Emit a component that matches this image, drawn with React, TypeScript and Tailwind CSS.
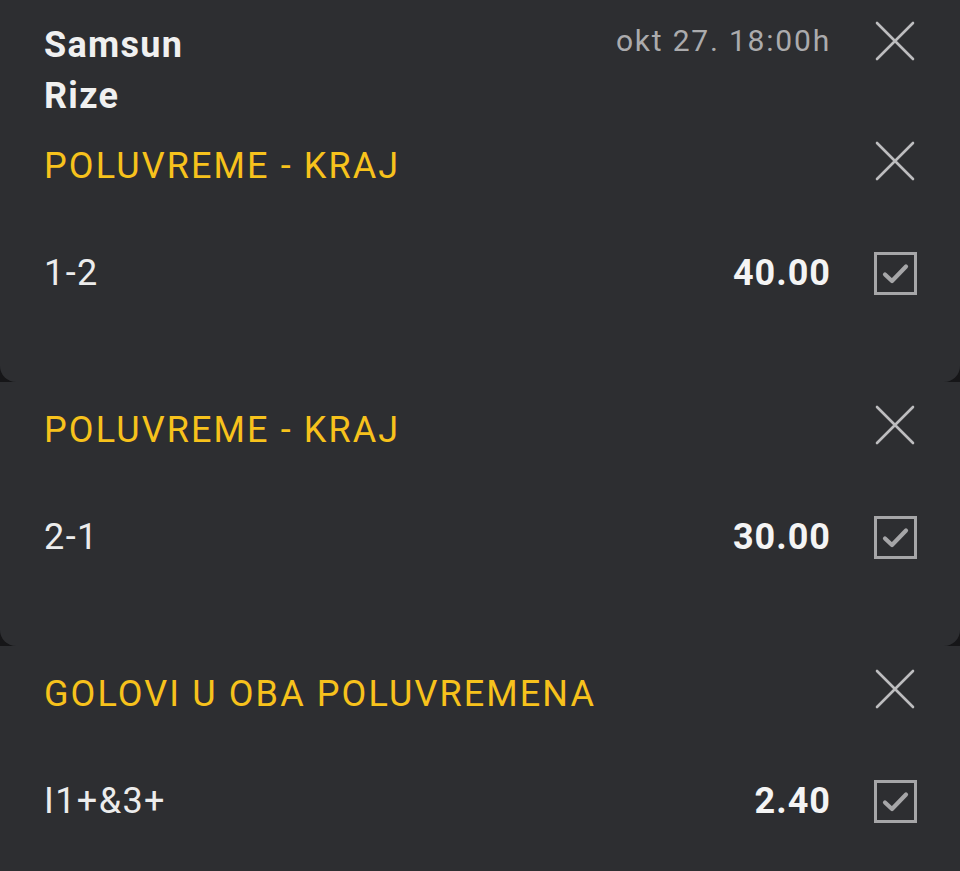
import React from "react"

interface Pick {
  market: string
  label: string
  odds: string
}

const picks: Pick[] = [
  { market: "POLUVREME - KRAJ", label: "1-2", odds: "40.00" },
  { market: "POLUVREME - KRAJ", label: "2-1", odds: "30.00" },
  { market: "GOLOVI U OBA POLUVREMENA", label: "I1+&3+", odds: "2.40" },
]

function CloseIcon({ className = "" }: { className?: string }) {
  return (
    <div className={`w-12 h-12 flex items-center justify-center shrink-0 ${className}`}>
      <svg width="40" height="40" viewBox="0 0 40 40" fill="none" stroke="#bdbdbf" strokeWidth="2.6" strokeLinecap="round">
        <path d="M2 2L38 38M38 2L2 38" />
      </svg>
    </div>
  )
}

function CheckBox() {
  return (
    <div className="w-12 h-12 flex items-center justify-center shrink-0">
      <svg width="43" height="43" viewBox="0 0 43 43" fill="none" stroke="#a6a6a8">
        <rect x="1.5" y="1.5" width="40" height="40" strokeWidth="3" />
        <path d="M11 22.5L18 29L32 14.5" strokeWidth="4.2" strokeLinecap="round" strokeLinejoin="round" />
      </svg>
    </div>
  )
}

function PickBlock({ pick }: { pick: Pick }) {
  return (
    <div>
      {/* Market title */}
      <div className="h-[96px] flex items-center justify-between pl-[44px] pr-[41px]">
        <span className="text-[36px] leading-none text-[#f7c21c] tracking-[2.1px]">{pick.market}</span>
        <CloseIcon className="mb-[10px]" />
      </div>
      {/* Selection */}
      <div className="h-[118px] flex items-center justify-between pl-[44px] pr-[41px]">
        <span className="text-[36px] leading-none text-[#ececec] tracking-[1.4px]">{pick.label}</span>
        <div className="flex items-center gap-[40px]">
          <span className="text-[36px] leading-none font-bold text-[#f4f4f4] tracking-[1px]">{pick.odds}</span>
          <CheckBox />
        </div>
      </div>
      <div className="h-[50px]" />
    </div>
  )
}

export default function App() {
  return (
    <div
      className="w-[960px] h-[871px] overflow-hidden bg-[#161618]"
      style={{ fontFamily: "Roboto, 'Noto Sans', sans-serif" }}
    >
      {/* Match card */}
      <div className="bg-[#2d2e31] rounded-b-[16px]">
        <div className="h-[118px] flex justify-between pl-[44px] pr-[41px] pt-[20px]">
          <div className="text-[36px] leading-[51px] font-bold text-[#f0f0f0] tracking-[1.3px]">
            <div>Samsun</div>
            <div>Rize</div>
          </div>
          <div className="flex items-start gap-[40px] -mt-[3px]">
            <span className="text-[30px] leading-[48px] text-[#ababad] tracking-[1.8px]">okt 27. 18:00h</span>
            <CloseIcon />
          </div>
        </div>
        <PickBlock pick={picks[0]} />
      </div>

      <div className="bg-[#2d2e31] rounded-b-[16px]">
        <PickBlock pick={picks[1]} />
      </div>

      <div className="bg-[#2d2e31] rounded-b-[16px]">
        <PickBlock pick={picks[2]} />
      </div>
    </div>
  )
}
